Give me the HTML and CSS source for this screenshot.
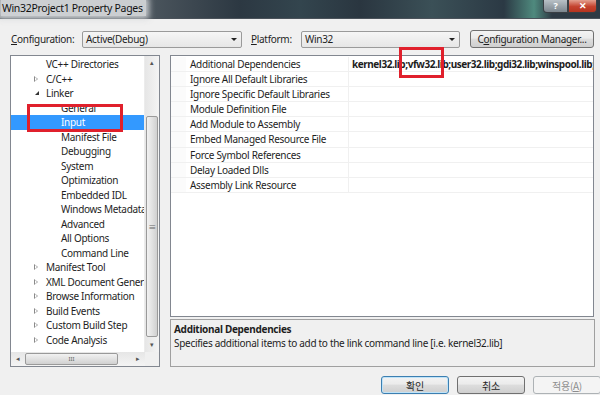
FILE: index.html
```html
<!DOCTYPE html>
<html lang="en">
<head>
    <meta charset="UTF-8">
    <meta name="viewport" content="width=device-width, initial-scale=1.0">
    <title>Win32Project1 Property Pages</title>
    <link rel="stylesheet" href="styles.css">
</head>
<body>
<div class="window">

    <div class="titlebar">
        <span class="title">Win32Project1 Property Pages</span>
        <div class="caption-btns">
            <span class="cap cap-help">?</span>
            <span class="cap cap-close">&#x2715;</span>
        </div>
    </div>

    <div class="dialog">
        <!-- configuration / platform row -->
        <div class="config-row">
            <span class="lbl"><u>C</u>onfiguration:</span>
            <div class="combo combo-config"><span>Active(Debug)</span><i class="arrow"></i></div>
            <span class="lbl lbl-platform"><u>P</u>latform:</span>
            <div class="combo combo-platform"><span>Win32</span><i class="arrow"></i></div>
            <div class="btn btn-manager">C<u>o</u>nfiguration Manager...</div>
        </div>

        <div class="main">
            <!-- left tree -->
            <div class="tree">
                <div class="tree-body">
                    <ul class="tree-list">
                        <li class="lvl1">VC++ Directories</li>
                        <li class="lvl1"><i class="exp closed"></i>C/C++</li>
                        <li class="lvl1"><i class="exp open"></i>Linker</li>
                        <li class="lvl2">General</li>
                        <li class="lvl2 selected">Input</li>
                        <li class="lvl2">Manifest File</li>
                        <li class="lvl2">Debugging</li>
                        <li class="lvl2">System</li>
                        <li class="lvl2">Optimization</li>
                        <li class="lvl2">Embedded IDL</li>
                        <li class="lvl2">Windows Metadata</li>
                        <li class="lvl2">Advanced</li>
                        <li class="lvl2">All Options</li>
                        <li class="lvl2">Command Line</li>
                        <li class="lvl1"><i class="exp closed"></i>Manifest Tool</li>
                        <li class="lvl1"><i class="exp closed"></i>XML Document Generator</li>
                        <li class="lvl1"><i class="exp closed"></i>Browse Information</li>
                        <li class="lvl1"><i class="exp closed"></i>Build Events</li>
                        <li class="lvl1"><i class="exp closed"></i>Custom Build Step</li>
                        <li class="lvl1"><i class="exp closed"></i>Code Analysis</li>
                    </ul>
                    <div class="vscroll">
                        <div class="sb-arrow">&#x25B4;</div>
                        <div class="vtrack">
                            <div class="vthumb"><span class="grip">&#x2261;</span></div>
                        </div>
                        <div class="sb-arrow">&#x25BE;</div>
                    </div>
                </div>
                <div class="hscroll-row">
                    <div class="hscroll">
                        <div class="sb-arrow">&#x25C2;</div>
                        <div class="hthumb"><span class="grip">III</span></div>
                        <div class="htrack"></div>
                        <div class="sb-arrow">&#x25B8;</div>
                    </div>
                    <div class="corner"></div>
                </div>
            </div>

            <!-- right property grid -->
            <div class="right">
                <div class="grid">
                    <div class="row"><span class="gutter"></span><span class="name">Additional Dependencies</span><span class="value">kernel32.lib;vfw32.lib;user32.lib;gdi32.lib;winspool.lib;comdlg32.lib</span></div>
                    <div class="row"><span class="gutter"></span><span class="name">Ignore All Default Libraries</span><span class="value"></span></div>
                    <div class="row"><span class="gutter"></span><span class="name">Ignore Specific Default Libraries</span><span class="value"></span></div>
                    <div class="row"><span class="gutter"></span><span class="name">Module Definition File</span><span class="value"></span></div>
                    <div class="row"><span class="gutter"></span><span class="name">Add Module to Assembly</span><span class="value"></span></div>
                    <div class="row"><span class="gutter"></span><span class="name">Embed Managed Resource File</span><span class="value"></span></div>
                    <div class="row"><span class="gutter"></span><span class="name">Force Symbol References</span><span class="value"></span></div>
                    <div class="row"><span class="gutter"></span><span class="name">Delay Loaded Dlls</span><span class="value"></span></div>
                    <div class="row"><span class="gutter"></span><span class="name">Assembly Link Resource</span><span class="value"></span></div>
                </div>
                <div class="desc">
                    <div class="desc-title">Additional Dependencies</div>
                    <div class="desc-text">Specifies additional items to add to the link command line [i.e. kernel32.lib]</div>
                </div>
            </div>
        </div>

        <div class="buttons">
            <div class="btn btn-default">확인</div>
            <div class="btn">취소</div>
            <div class="btn btn-disabled">적용(<u>A</u>)</div>
        </div>
    </div>

    <!-- red highlight marks -->
    <div class="mark mark-input"></div>
    <div class="mark mark-lib"></div>
</div>
</body>
</html>
```

FILE: styles.css
```css
html, body {
    margin: 0;
    padding: 0;
}

body {
    font-family: "Noto Sans", "Noto Sans CJK KR", sans-serif;
    font-size: 10px;
    letter-spacing: -0.3px;
    color: #1e1e1e;
    background: #f0f0f0;
}

.window {
    position: relative;
    width: 600px;
    height: 395px;
    overflow: hidden;
    background: #f0f0f0;
}

/* title bar (aero glass) */
.titlebar {
    height: 19px;
    display: flex;
    align-items: flex-start;
    background: linear-gradient(to right, #6f777e 0, #4b555d 25%, #2c3842 40%, #33454e 50%, #2a3640 60%, #3b5057 72%, #2b3944 84%, #4f8a7e 89%, #2e3a44 92%);
    border-bottom: 1px solid #4a525a;
    box-sizing: border-box;
}

.title {
    margin-left: 1px;
    padding: 1px 3px 0 1px;
    line-height: 15px;
    font-size: 10.5px;
    color: #111;
    background: rgba(214, 216, 218, 0.92);
    box-shadow: 0 0 6px 3px rgba(214, 216, 218, 0.9);
}

.caption-btns {
    margin-left: auto;
    margin-right: 3px;
    display: flex;
}

.cap {
    height: 13px;
    line-height: 12px;
    text-align: center;
    color: #fff;
    font-size: 9px;
    font-weight: bold;
    border: 1px solid #3a3f44;
    border-top: none;
    box-sizing: border-box;
}

.cap-help {
    width: 25px;
    background: linear-gradient(#b8c0c6, #7c868e);
    border-radius: 0 0 0 4px;
}

.cap-close {
    width: 29px;
    background: linear-gradient(#e3a08f, #c4422e 55%, #b6341f);
    border-radius: 0 0 4px 0;
}

/* dialog body */
.dialog {
    padding: 11px 3px 0 10px;
}

.config-row {
    display: flex;
    align-items: center;
    height: 18px;
}

.lbl {
    width: 71px;
    padding-left: 1px;
}

.lbl-platform {
    width: 50px;
    padding-left: 0;
}

.combo {
    height: 17px;
    box-sizing: border-box;
    border: 1px solid #9a9a9a;
    border-radius: 2px;
    background: linear-gradient(#f6f6f6, #e6e6e6);
    display: flex;
    align-items: center;
    padding-left: 3px;
}

.combo span {
    flex: 1;
}

.combo-config {
    width: 160px;
    margin-right: 9px;
}

.combo-platform {
    width: 159px;
    margin-right: 10px;
}

.arrow {
    width: 0;
    height: 0;
    margin-right: 4px;
    border-left: 3px solid transparent;
    border-right: 3px solid transparent;
    border-top: 3px solid #222;
}

.btn {
    height: 18px;
    box-sizing: border-box;
    border: 1px solid #707070;
    border-radius: 3px;
    background: linear-gradient(#f3f3f3 0, #ebebeb 45%, #dddddd 50%, #cfcfcf 100%);
    display: flex;
    align-items: center;
    justify-content: center;
}

.btn-manager {
    width: 124px;
}

/* main panels */
.main {
    display: flex;
    margin-top: 7px;
    height: 312px;
}

.tree {
    width: 150px;
    margin-right: 10px;
    box-sizing: border-box;
    border: 1px solid #828790;
    background: #fff;
    display: flex;
    flex-direction: column;
}

.tree-body {
    flex: 1;
    display: flex;
    overflow: hidden;
}

.tree-list {
    list-style: none;
    margin: 0;
    padding: 1px 0 0 0;
    flex: 1;
    overflow: hidden;
}

.tree-list li {
    height: 14.5px;
    line-height: 14.5px;
    white-space: nowrap;
    position: relative;
}

.lvl1 {
    padding-left: 35px;
}

.lvl2 {
    padding-left: 50px;
}

.tree-list li.selected {
    background: #3399ff;
    color: #fff;
}

.exp {
    position: absolute;
    left: 23px;
    top: 4px;
    width: 0;
    height: 0;
}

.exp.closed {
    border-top: 3.5px solid transparent;
    border-bottom: 3.5px solid transparent;
    border-left: 4px solid #8a8a8a;
}

.exp.closed::after {
    content: "";
    position: absolute;
    left: -3px;
    top: -2px;
    border-top: 2px solid transparent;
    border-bottom: 2px solid transparent;
    border-left: 2px solid #fff;
}

.exp.open {
    left: 24px;
    top: 5px;
    border-left: 4px solid transparent;
    border-bottom: 4px solid #333;
}

/* scrollbars */
.vscroll {
    width: 14px;
    display: flex;
    flex-direction: column;
    background: linear-gradient(to right, #e6e6e6, #f4f4f4);
    border-left: 1px solid #ececec;
}

.sb-arrow {
    height: 14px;
    width: 14px;
    line-height: 14px;
    text-align: center;
    font-size: 7px;
    color: #555;
}

.vtrack {
    flex: 1;
    padding-top: 46px;
    padding-bottom: 1px;
    display: flex;
    flex-direction: column;
}

.vthumb {
    flex: 1;
    margin: 0 1px;
    border: 1px solid #9a9a9a;
    border-radius: 2px;
    background: linear-gradient(to right, #f2f2f2, #e0e0e0 55%, #d0d0d0);
    display: flex;
    align-items: center;
    justify-content: center;
}

.grip {
    font-size: 8px;
    color: #666;
}

.hscroll-row {
    display: flex;
    height: 14px;
}

.hscroll {
    flex: 1;
    display: flex;
    background: linear-gradient(#e6e6e6, #f4f4f4);
}

.hthumb {
    width: 91px;
    margin: 1px 0;
    border: 1px solid #9a9a9a;
    border-radius: 2px;
    background: linear-gradient(#f2f2f2, #e0e0e0 55%, #d0d0d0);
    display: flex;
    align-items: center;
    justify-content: center;
}

.hthumb .grip {
    font-size: 6px;
    letter-spacing: 0;
}

.htrack {
    flex: 1;
}

.corner {
    width: 14px;
    background: #f0f0f0;
}

/* property grid */
.right {
    width: 424px;
    display: flex;
    flex-direction: column;
}

.grid {
    height: 262px;
    box-sizing: border-box;
    border: 1px solid #828790;
    background: #fff;
    padding-top: 1px;
    overflow: hidden;
}

.row {
    display: flex;
    height: 15.1px;
    line-height: 14px;
    box-sizing: border-box;
    border-bottom: 1px solid #f0f0f0;
}

.gutter {
    width: 15px;
    background: #fbfbfb;
}

.name {
    width: 163px;
    padding-left: 4px;
    box-sizing: border-box;
    border-right: 1px solid #f0f0f0;
    white-space: nowrap;
    overflow: hidden;
}

.value {
    flex: 1;
    padding-left: 3px;
    font-weight: bold;
    letter-spacing: -0.45px;
    white-space: nowrap;
    overflow: hidden;
}

.desc {
    margin-top: 2px;
    flex: 1;
    box-sizing: border-box;
    border: 1px solid #a0a0a0;
    margin-right: -1px;
    padding: 2px 3px;
    line-height: 14px;
}

.desc-title {
    font-weight: bold;
}

/* bottom buttons */
.buttons {
    display: flex;
    justify-content: flex-end;
    gap: 8px;
    margin-top: 9px;
    margin-right: -4px;
    font-family: "Noto Sans CJK KR", "Noto Sans", sans-serif;
}

.buttons .btn {
    width: 68px;
}

.btn-default {
    border-color: #3c7fb1;
    box-shadow: inset 0 0 0 1px #bfe3f8;
}

.btn-disabled {
    color: #8c8c8c;
    border-color: #adb2b5;
    background: #f4f4f4;
}

/* red annotation boxes */
.mark {
    position: absolute;
    border: 3px solid #e0202c;
    box-sizing: border-box;
}

.mark-input {
    left: 27px;
    top: 104px;
    width: 96px;
    height: 28px;
}

.mark-lib {
    left: 399px;
    top: 47px;
    width: 45px;
    height: 31px;
}
```
